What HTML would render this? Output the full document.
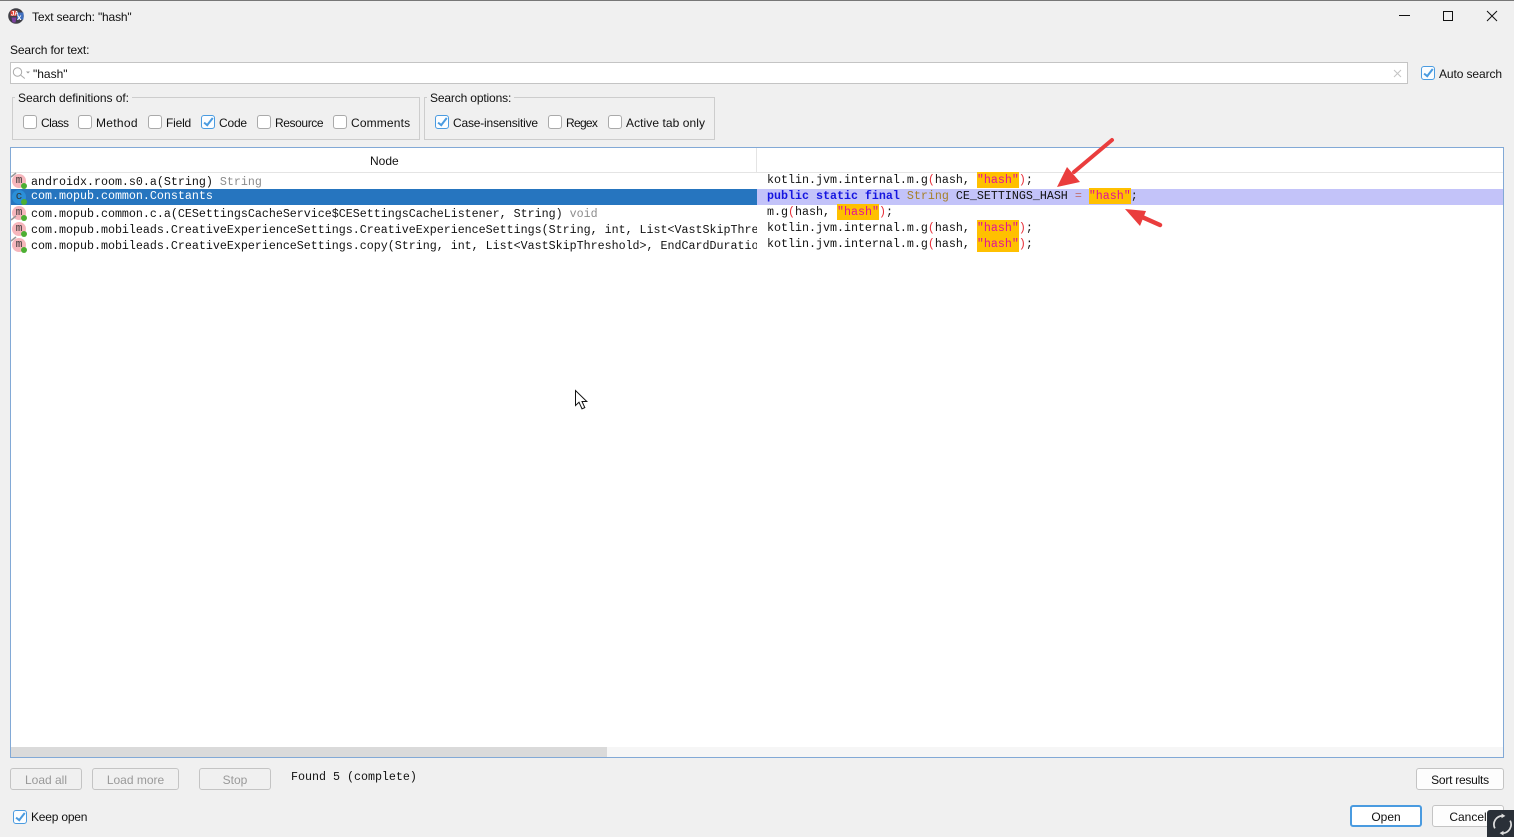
<!DOCTYPE html>
<html><head><meta charset="utf-8"><style>
html,body{margin:0;padding:0}
body{width:1514px;height:837px;position:relative;overflow:hidden;background:#f0f0f0;font-family:"Liberation Sans",sans-serif;font-size:12px;color:#111}
.a,.t,.m,.cb,.b,svg{position:absolute}
.t{white-space:nowrap;line-height:16px}
.m{white-space:pre;font-family:"Liberation Mono",monospace;font-size:11.67px;line-height:16px;color:#111}
.cb{width:12px;height:12px;border:1px solid #aaa;border-radius:3px;background:#fff}
.cb.on{border-color:#4a9be0;background:#fbfdff}
.cb.on::after{content:"";position:absolute;left:4px;top:0;width:3px;height:8px;border:solid #4a9be0;border-width:0 2px 2px 0;transform:rotate(38deg)}
.b{box-sizing:border-box;border:1px solid #c4c4c4;border-radius:3px;text-align:center;height:22px;line-height:22px;background:#f0f0f0}
.d{color:#999}
.w{background:#fff}
.g{color:#8c8c8c}
.h{background:#ffc000;color:#e0109a;display:inline-block;height:16px}
.p{color:#e8303a}
.eq{color:#c07070}
.kw{color:#1515e0;font-weight:bold}
.ty{color:#a6812a}
.gb{position:absolute;border:1px solid #cdcdcd;box-sizing:border-box}
.lg{position:absolute;background:#f0f0f0;padding:0 3px;line-height:14px;white-space:nowrap}
.ic{position:absolute;left:12px;width:14px;height:14px;border-radius:50%;background:#f6b6bc}
.ic b{position:absolute;left:0;top:0;width:14px;text-align:center;font:11px/14px "Liberation Mono",monospace;color:#333}
.ic i{position:absolute;left:9px;top:9px;width:6px;height:6px;border-radius:50%;background:#4caf33}
</style></head><body>
<div class="a" style="left:0;top:0;width:1514px;height:1px;background:#777"></div>

<svg style="left:8px;top:8px" width="16" height="16" viewBox="0 0 16 16"><circle cx="8" cy="8" r="7.8" fill="#3f3f46"/><path d="M2.5 2.5h6v5.5h-6z" fill="#e0473a"/><path d="M3.5 9.5h5l-1 5h-3z" fill="#7c3fa0"/><path d="M9 4.5h6.5v7H9z" fill="#3f6fc0"/><text x="3" y="7.5" font-family="Liberation Sans" font-weight="bold" font-size="6" fill="#fff">JA</text><text x="9" y="12" font-family="Liberation Sans" font-weight="bold" font-size="8" fill="#fff">x</text></svg>
<div class="t" style="left:32px;top:9px;letter-spacing:-.16px">Text search: "hash"</div>

<div class="a" style="left:1399px;top:15px;width:11px;height:1px;background:#111"></div>
<div class="a" style="left:1443px;top:11px;width:8px;height:8px;border:1px solid #111"></div>
<svg style="left:1486px;top:10px" width="12" height="12"><path d="M1 1l10 10M11 1L1 11" stroke="#111" stroke-width="1" fill="none"/></svg>

<div class="t" style="left:10px;top:42px;letter-spacing:-.13px">Search for text:</div>
<div class="a w" style="left:10px;top:62px;width:1396px;height:20px;border:1px solid #c4c4c4"></div>
<svg style="left:12px;top:66px" width="18" height="14"><circle cx="5.5" cy="6" r="4.2" fill="none" stroke="#aaa"/><path d="M8.8 9.2l4 3.3" stroke="#aaa" fill="none"/><path d="M14 5.5h4l-2 2z" fill="#999"/></svg>
<div class="t" style="left:33px;top:66px">"hash"</div>
<svg style="left:1393px;top:69px" width="9" height="9"><path d="M1 1l7 7M8 1L1 8" stroke="#c4c4c4" fill="none"/></svg>
<div class="cb on" style="left:1421px;top:66px"></div>
<div class="t" style="left:1439px;top:66px;letter-spacing:-.1px">Auto search</div>

<div class="gb" style="left:12px;top:97px;width:408px;height:43px"></div>
<div class="lg" style="left:15px;top:91px;letter-spacing:-.05px">Search definitions of:</div>
<div class="cb" style="left:23px;top:115px"></div><div class="t" style="left:41px;top:115px;letter-spacing:-.5px">Class</div>
<div class="cb" style="left:78px;top:115px"></div><div class="t" style="left:96px;top:115px;letter-spacing:.3px">Method</div>
<div class="cb" style="left:148px;top:115px"></div><div class="t" style="left:166px;top:115px;letter-spacing:-.2px">Field</div>
<div class="cb on" style="left:201px;top:115px"></div><div class="t" style="left:219px;top:115px;letter-spacing:-.2px">Code</div>
<div class="cb" style="left:257px;top:115px"></div><div class="t" style="left:275px;top:115px;letter-spacing:-.4px">Resource</div>
<div class="cb" style="left:333px;top:115px"></div><div class="t" style="left:351px;top:115px;letter-spacing:.15px">Comments</div>

<div class="gb" style="left:424px;top:97px;width:291px;height:43px"></div>
<div class="lg" style="left:427px;top:91px;letter-spacing:-.15px">Search options:</div>
<div class="cb on" style="left:435px;top:115px"></div><div class="t" style="left:453px;top:115px;letter-spacing:-.2px">Case-insensitive</div>
<div class="cb" style="left:548px;top:115px"></div><div class="t" style="left:566px;top:115px;letter-spacing:-.7px">Regex</div>
<div class="cb" style="left:608px;top:115px"></div><div class="t" style="left:626px;top:115px;letter-spacing:.07px">Active tab only</div>

<div class="a w" style="left:10px;top:147px;width:1492px;height:609px;border:1px solid #82a9d6"></div>
<div class="a" style="left:11px;top:172px;width:1492px;height:1px;background:#e4e4e4"></div>
<div class="a" style="left:756px;top:148px;width:1px;height:24px;background:#e4e4e4"></div>
<div class="t" style="left:370px;top:153px">Node</div>

<div class="a" style="left:11px;top:189px;width:746px;height:16px;background:#2675bf"></div>
<div class="a" style="left:757px;top:189px;width:746px;height:16px;background:#c3c3f9"></div>

<div class="ic" style="top:174px"><b>m</b><i></i></div>
<div class="ic" style="top:190px;background:#2b8fd8"><b>c</b><i></i></div>
<div class="ic" style="top:206px"><b>m</b><i></i></div>
<div class="ic" style="top:222px"><b>m</b><i></i></div>
<div class="ic" style="top:238px"><b>m</b><i></i></div>
<svg style="left:10px;top:172px" width="8" height="6"><path d="M1 5l5-4" stroke="#999" stroke-width="1.5" fill="none"/></svg>
<svg style="left:10px;top:215px" width="8" height="6"><path d="M1 5l5-4" stroke="#999" stroke-width="1.5" fill="none"/></svg>
<svg style="left:10px;top:236px" width="8" height="6"><path d="M1 5l5-4" stroke="#999" stroke-width="1.5" fill="none"/></svg>

<div class="m" style="left:31px;top:174px">androidx.room.s0.a(String) <span class="g">String</span></div>
<div class="m" style="left:31px;top:188px;color:#fff">com.mopub.common.Constants</div>
<div class="m" style="left:31px;top:206px">com.mopub.common.c.a(CESettingsCacheService$CESettingsCacheListener, String) <span class="g">void</span></div>
<div class="a" style="left:31px;top:222px;width:726px;height:32px;overflow:hidden">
<div class="m" style="left:0;top:0">com.mopub.mobileads.CreativeExperienceSettings.CreativeExperienceSettings(String, int, List&lt;VastSkipThreshold&gt;</div>
<div class="m" style="left:0;top:16px">com.mopub.mobileads.CreativeExperienceSettings.copy(String, int, List&lt;VastSkipThreshold&gt;, EndCardDuration</div>
</div>

<div class="m" style="left:767px;top:172px">kotlin.jvm.internal.m.g<span class="p">(</span>hash, <span class="h">"hash"</span><span class="p">)</span>;</div>
<div class="m" style="left:767px;top:188px"><span class="kw">public static final</span> <span class="ty">String</span> CE_SETTINGS_HASH <span class="eq">=</span> <span class="h">"hash"</span>;</div>
<div class="m" style="left:767px;top:204px">m.g<span class="p">(</span>hash, <span class="h">"hash"</span><span class="p">)</span>;</div>
<div class="m" style="left:767px;top:220px">kotlin.jvm.internal.m.g<span class="p">(</span>hash, <span class="h">"hash"</span><span class="p">)</span>;</div>
<div class="m" style="left:767px;top:236px">kotlin.jvm.internal.m.g<span class="p">(</span>hash, <span class="h">"hash"</span><span class="p">)</span>;</div>

<svg style="left:1050px;top:130px" width="120" height="105" viewBox="0 0 120 105">
<path d="M62 10L24 42" stroke="#ea3d3d" stroke-width="4" stroke-linecap="round" fill="none"/>
<path d="M7 57L17 37L30 52Z" fill="#ea3d3d"/>
<path d="M110 95L92 87" stroke="#ea3d3d" stroke-width="4.5" stroke-linecap="round" fill="none"/>
<path d="M75 79L96 81L90 96Z" fill="#ea3d3d"/>
</svg>

<div class="a" style="left:11px;top:747px;width:1492px;height:10px;background:#f6f6f6"></div>
<div class="a" style="left:11px;top:747px;width:596px;height:10px;background:#dadada"></div>

<svg style="left:574px;top:389px" width="16" height="22" viewBox="0 0 16 22"><path d="M1.5 1.5V16.5L5 13.2L8 19.8L10.8 18.6L8 12.5H12.8Z" fill="#fff" stroke="#111" stroke-width="1"/></svg>

<div class="b d" style="left:10px;top:768px;width:72px">Load all</div>
<div class="b d" style="left:92px;top:768px;width:87px">Load more</div>
<div class="b d" style="left:199px;top:768px;width:72px">Stop</div>
<div class="m" style="left:291px;top:769px">Found 5 (complete)</div>
<div class="b" style="left:1416px;top:768px;width:88px;background:#fdfdfd;letter-spacing:-.25px">Sort results</div>

<div class="cb on" style="left:13px;top:810px"></div>
<div class="t" style="left:31px;top:809px;letter-spacing:-.2px">Keep open</div>
<div class="b" style="left:1350px;top:805px;width:72px;border:2px solid #4a9be0;background:#fff;line-height:20px">Open</div>
<div class="b" style="left:1432px;top:805px;width:72px;background:#fdfdfd">Cancel</div>

<div class="a" style="left:1487px;top:810px;width:27px;height:27px;background:#2a3038;border-radius:3px 0 0 0"></div>
<svg style="left:1491px;top:812px" width="23" height="25" viewBox="0 0 24 24"><path d="M4 16A9 9 0 0 1 12 3" stroke="#ddd" stroke-width="1.8" fill="none"/><path d="M20 8A9 9 0 0 1 12 21" stroke="#ddd" stroke-width="1.8" fill="none"/><path d="M11 0.5l4 2.5-4 2.5z" fill="#ddd"/><path d="M13 23.5l-4-2.5 4-2.5z" fill="#ddd"/></svg>
</body></html>
